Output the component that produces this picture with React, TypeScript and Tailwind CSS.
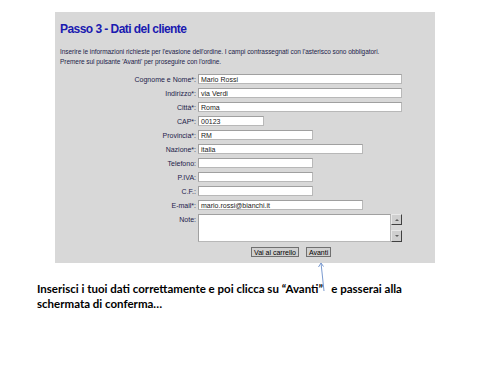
import React from "react";

const F = { fontFamily: '"Liberation Sans", Arial, sans-serif' };

function Field({ label, value = "", w }: { label: string; value?: string; w: string }) {
  return (
    <>
      <div className="h-[10px] flex items-center justify-end text-[7px] leading-none text-[#1c1c4a]">{label}</div>
      <div className="h-[10px] flex items-center">
        <div className={`${w} h-[10px] bg-white border border-[#b8b8b8] border-t-[#a0a0a0] border-l-[#a0a0a0] flex items-center pl-[2px] text-[7px] leading-none text-[#202020]`}>
          {value}
        </div>
      </div>
    </>
  );
}

export default function App() {
  return (
    <div className="relative w-[500px] h-[375px] bg-white" style={F}>
      <div className="pt-[12px] pl-[55px]">
        <div className="w-[380px] h-[251px] bg-[#d8d8d8] px-[5px] pt-[11px]">
          <div className="text-[12px] font-bold leading-[12px] tracking-[-0.55px] text-[#1a1ab0]">Passo 3 - Dati del cliente</div>
          <div className="mt-[12px] text-[6.5px] leading-[10px] text-[#1c1c4a] tracking-[-0.05px]">
            <div>Inserire le informazioni richieste per l'evasione dell'ordine. I campi contrassegnati con l'asterisco sono obbligatori.</div>
            <div>Premere sul pulsante 'Avanti' per proseguire con l'ordine.</div>
          </div>
          <div className="mt-[7px] grid grid-cols-[136px_1fr] gap-x-[2px] gap-y-[4px]">
            <Field label="Cognome e Nome*:" value="Mario Rossi" w="w-[204px]" />
            <Field label="Indirizzo*:" value="via Verdi" w="w-[204px]" />
            <Field label="Città*:" value="Roma" w="w-[204px]" />
            <Field label="CAP*:" value="00123" w="w-[66px]" />
            <Field label="Provincia*:" value="RM" w="w-[115px]" />
            <Field label="Nazione*:" value="italia" w="w-[165px]" />
            <Field label="Telefono:" w="w-[115px]" />
            <Field label="P.IVA:" w="w-[115px]" />
            <Field label="C.F.:" w="w-[115px]" />
            <Field label="E-mail*:" value="mario.rossi@bianchi.it" w="w-[165px]" />
            <div className="h-[10px] flex items-center justify-end text-[7px] leading-none text-[#1c1c4a]">Note:</div>
            <div className="flex">
              <div className="w-[193px] h-[28px] bg-white border border-[#b8b8b8] border-t-[#a0a0a0] border-l-[#a0a0a0]" />
              <div className="w-[11px] h-[28px] flex flex-col justify-between">
                <div className="h-[11px] bg-[#cfcfcf] border border-[#e8e8e8] border-r-[#404040] border-b-[#404040] flex items-center justify-center">
                  <div className="w-0 h-0 border-l-[2px] border-r-[2px] border-b-[2px] border-l-transparent border-r-transparent border-b-[#606060]" />
                </div>
                <div className="h-[12px] bg-[#cfcfcf] border border-[#e8e8e8] border-r-[#404040] border-b-[#404040] flex items-center justify-center">
                  <div className="w-0 h-0 border-l-[2px] border-r-[2px] border-t-[2px] border-l-transparent border-r-transparent border-t-[#606060]" />
                </div>
              </div>
            </div>
          </div>
          <div className="mt-[5px] flex pl-[191px] gap-[7px]">
            <div className="h-[10px] px-[2px] bg-[#d0d0d0] border border-[#707070] flex items-center text-[7px] leading-none text-black">Vai al carrello</div>
            <div className="h-[10px] px-[2px] bg-[#d0d0d0] border border-[#707070] flex items-center text-[7px] leading-none text-black">Avanti</div>
          </div>
        </div>
      </div>
      <div className="pl-[37px] pt-[18px] text-[11.5px] leading-[15px] font-bold text-black" style={{ fontFamily: 'Lato, "Open Sans", sans-serif' }}>
        <div>Inserisci i tuoi dati correttamente e poi clicca su “Avanti”&nbsp;&nbsp; e passerai alla</div>
        <div>schermata di conferma…</div>
      </div>
      <svg className="absolute left-0 top-0" width="500" height="375">
        <line x1="324" y1="291" x2="321" y2="263" stroke="#7a9ad0" strokeWidth="1" />
        <polyline points="318.5,267 321,263 323.5,266.5" fill="none" stroke="#7a9ad0" strokeWidth="1" />
      </svg>
    </div>
  );
}
